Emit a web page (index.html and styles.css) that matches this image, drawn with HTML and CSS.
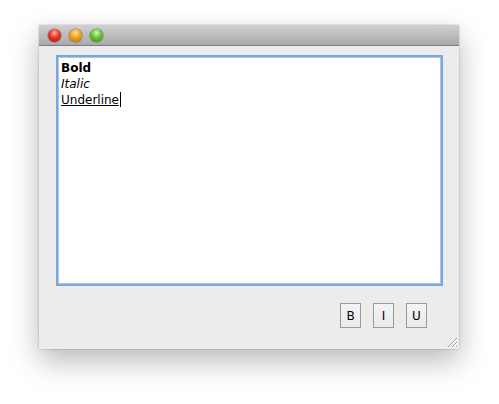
FILE: index.html
```
<!DOCTYPE html>
<html>
<head>
<meta charset="utf-8">
<link rel="stylesheet" href="styles.css">
</head>
<body>
<div class="window">
  <div class="titlebar">
    <span class="light red"></span>
    <span class="light orange"></span>
    <span class="light green"></span>
  </div>
  <div class="content">
    <div class="editor">
      <div class="line b">Bold</div>
      <div class="line i">Italic</div>
      <div class="line u"><span class="ul">Underline</span><span class="caret"></span></div>
    </div>
    <div class="toolbar">
      <button class="btn">B</button>
      <button class="btn">I</button>
      <button class="btn">U</button>
    </div>
    <svg class="grip" width="13" height="13" viewBox="0 0 13 13">
      <line x1="12" y1="3" x2="3" y2="12" stroke="#9a9a9a" stroke-width="1"/>
      <line x1="12" y1="7" x2="7" y2="12" stroke="#9a9a9a" stroke-width="1"/>
      <line x1="12" y1="11" x2="11" y2="12" stroke="#9a9a9a" stroke-width="1"/>
      <line x1="12" y1="4" x2="4" y2="12" stroke="#ffffff" stroke-width="1"/>
      <line x1="12" y1="8" x2="8" y2="12" stroke="#ffffff" stroke-width="1"/>
    </svg>
  </div>
</div>
</body>
</html>
```
FILE: styles.css
```
html, body {
  margin: 0;
  padding: 0;
  background: #ffffff;
}
html {
  height: 100%;
}
body {
  min-height: 100%;
  box-sizing: border-box;
  padding: 25px 0 0 39px;
  font-family: "DejaVu Sans", "Liberation Sans", sans-serif;
}
.window {
  width: 420px;
  height: 324px;
  background: #ececec;
  box-shadow: 0 12px 28px rgba(0,0,0,0.28), 0 0 2px rgba(0,0,0,0.25);
  display: flex;
  flex-direction: column;
  position: relative;
}
.titlebar {
  height: 20px;
  border-bottom: 1px solid #7d7d7d;
  background: linear-gradient(#d0d0d0, #a9a9a9);
  display: flex;
  align-items: center;
  gap: 8px;
  padding-left: 9px;
}
.light {
  width: 13px;
  height: 13px;
  border-radius: 50%;
  box-shadow: 0 0 0 0.5px rgba(0,0,0,0.45);
}
.red {
  background: radial-gradient(circle at 50% 30%, #ffb3a8 0%, #f03a2c 40%, #b0080a 100%);
}
.orange {
  background: radial-gradient(circle at 50% 30%, #ffe2a0 0%, #f7a623 40%, #c26a00 100%);
}
.green {
  background: radial-gradient(circle at 50% 30%, #d4ffb0 0%, #6cc83c 40%, #2e8a10 100%);
}
.content {
  flex: 1;
  padding: 9px 16px 0 17px;
  display: flex;
  flex-direction: column;
  position: relative;
}
.editor {
  height: 231px;
  box-sizing: border-box;
  background: #ffffff;
  border: 2px solid #7aa8dc;
  box-shadow: inset 0 0 0 1px #a9c8ec;
  padding: 4px 3px;
  font-size: 12px;
  line-height: 15.5px;
  color: #000;
}
.b { font-weight: bold; }
.i { font-style: italic; }
.ul { text-decoration: underline; }
.caret {
  display: inline-block;
  width: 1px;
  height: 15px;
  background: #000;
  vertical-align: -3px;
  margin-left: 1px;
}
.toolbar {
  display: flex;
  justify-content: flex-end;
  gap: 12px;
  margin-top: 17px;
  padding-right: 16px;
}
.btn {
  width: 21px;
  height: 25px;
  padding: 0;
  margin: 0;
  border: 1px solid #9a9a9a;
  background: linear-gradient(#f4f4f4, #eaeaea);
  font-family: "DejaVu Sans", sans-serif;
  font-size: 12px;
  color: #000;
  border-radius: 0;
}
.grip {
  position: absolute;
  right: 1px;
  bottom: 1px;
}
```
